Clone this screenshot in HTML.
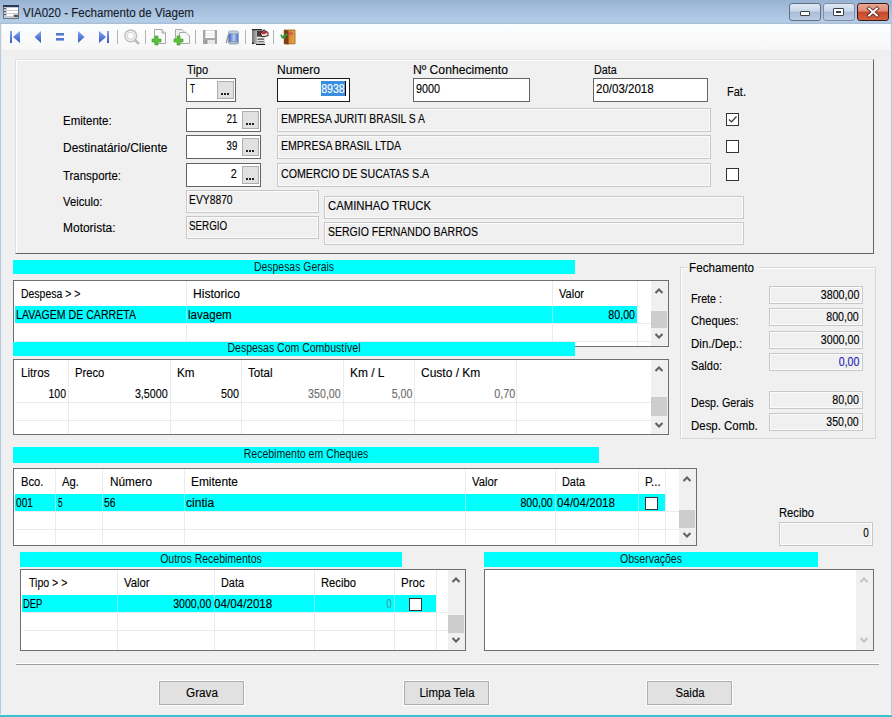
<!DOCTYPE html>
<html><head><meta charset="utf-8"><title>VIA020 - Fechamento de Viagem</title><style>
*{margin:0;padding:0;box-sizing:border-box}
html,body{width:892px;height:717px;overflow:hidden;background:#f0f0f0;font-family:"Liberation Sans",sans-serif;font-size:12px;color:#000}
.a{position:absolute}
.t{position:absolute;white-space:nowrap;line-height:14px;height:14px;-webkit-text-stroke-width:0.12px}
.ed{background:#fff;border:1px solid #646464}
.ro{background:#f0f0f0;border:1px solid #c8c8c8;box-shadow:inset 0 0 0 1px #fbfbfb}
.btn3{background:#e1e1e1;border:1px solid #adadad}
.cy{background:#00ffff}
.grid{background:#fff;border:1px solid #6e6e6e}
.vl{background:#ebebeb}
.hl{background:#ebebeb}
.sb{background:#f0f0f0}
.th{background:#cdcdcd}
.cb{background:#fff;border:1px solid #333}
.g{color:#6d6d6d}
</style></head><body>
<div class="a " style="left:0px;top:0px;width:892px;height:24px;background:linear-gradient(#98b2d3,#a9c2df 50%,#b4cde8 90%,#a8bcd0)"></div>
<svg class="a" style="left:3px;top:5px" width="16" height="14" viewBox="0 0 16 14"><rect x="0.5" y="0.5" width="15" height="13" fill="#c8ccd0" stroke="#6a7480"/><rect x="0" y="0" width="16" height="2" fill="#2a3a5a"/><rect x="4" y="3" width="11" height="2" fill="#fff"/><rect x="4" y="6" width="11" height="2" fill="#fff"/><rect x="4" y="9" width="6" height="2" fill="#fff"/><rect x="11" y="10" width="4" height="2" fill="#555"/><rect x="1" y="3" width="2" height="1" fill="#556"/><rect x="1" y="6" width="2" height="1" fill="#556"/><rect x="1" y="9" width="2" height="1" fill="#556"/></svg>
<div class="t " style="left:23px;top:6px;transform:scaleX(0.965);transform-origin:left top;color:#141c2c">VIA020 - Fechamento de Viagem</div>
<div class="a " style="left:789px;top:3px;width:32px;height:18px;border:1px solid #5d6f86;border-radius:3px;background:linear-gradient(#dfe8f3 0%,#c9d7e8 45%,#a9bdd6 50%,#bccde2 100%)"></div>
<div class="a " style="left:800px;top:11px;width:10px;height:5px;background:#fff;border:1px solid #3a4048;border-radius:1px"></div>
<div class="a " style="left:823px;top:3px;width:32px;height:18px;border:1px solid #7d8ea5;border-radius:3px;background:linear-gradient(#dfe8f3 0%,#c9d7e8 45%,#a9bdd6 50%,#bccde2 100%)"></div>
<div class="a " style="left:833px;top:8px;width:11px;height:8px;background:#fff;border:1px solid #3a4048;border-radius:1px"></div>
<div class="a " style="left:836px;top:11px;width:5px;height:2px;background:#3a4048"></div>
<div class="a " style="left:857px;top:3px;width:32px;height:18px;border:1px solid #3c1a14;border-radius:3px;background:linear-gradient(#eba695 0%,#de8a74 45%,#c6472a 50%,#d6623f 100%)"></div>
<svg class="a" style="left:866px;top:6px" width="14" height="12" viewBox="0 0 14 12"><path d="M3 2.5 L11 9.5 M11 2.5 L3 9.5" stroke="#4a1e12" stroke-width="3.6" stroke-linecap="square"/><path d="M3 2.5 L11 9.5 M11 2.5 L3 9.5" stroke="#fff" stroke-width="2" stroke-linecap="square"/></svg>
<div class="a " style="left:0px;top:24px;width:1px;height:693px;background:#bfc9d4"></div>
<div class="a " style="left:1px;top:24px;width:1px;height:691px;background:#e6eef8"></div>
<div class="a " style="left:2px;top:50px;width:2px;height:665px;background:linear-gradient(90deg,#eaf0f6,#eff1f3)"></div>
<div class="a " style="left:890px;top:24px;width:1px;height:693px;background:#e6eef8"></div>
<div class="a " style="left:891px;top:24px;width:1px;height:693px;background:#bfc9d4"></div>
<div class="a " style="left:0px;top:715px;width:892px;height:2px;background:#3ec0cc"></div>
<div class="a " style="left:0px;top:714px;width:892px;height:1px;background:#e6f2f8"></div>
<div class="a " style="left:2px;top:24px;width:888px;height:26px;background:linear-gradient(#fcfdfe,#f7f7f7)"></div>
<div class="a " style="left:2px;top:50px;width:888px;height:7px;background:#efefef"></div>
<svg class="a" style="left:0;top:24px" width="320" height="26" viewBox="0 24 320 26">
<defs>
<linearGradient id="bl" x1="0" y1="0" x2="0" y2="1"><stop offset="0" stop-color="#86a4ee"/><stop offset=".5" stop-color="#5a7edc"/><stop offset="1" stop-color="#3a58b8"/></linearGradient>
<linearGradient id="blr" x1="0" y1="0" x2="0" y2="1"><stop offset="0" stop-color="#86a4ee"/><stop offset=".5" stop-color="#5a7edc"/><stop offset="1" stop-color="#3a58b8"/></linearGradient>
<linearGradient id="cyl" x1="0" y1="0" x2="1" y2="0"><stop offset="0" stop-color="#3e5cb8"/><stop offset=".55" stop-color="#b4cbf4"/><stop offset="1" stop-color="#4464c0"/></linearGradient>
<linearGradient id="door" x1="0" y1="0" x2="1" y2="0"><stop offset="0" stop-color="#c07020"/><stop offset="1" stop-color="#eca848"/></linearGradient><linearGradient id="cab" x1="0" y1="0" x2="1" y2="0"><stop offset="0" stop-color="#707070"/><stop offset=".4" stop-color="#b8b8b8"/><stop offset="1" stop-color="#9a9a9a"/></linearGradient>
</defs>
<rect x="10" y="31" width="2" height="12" fill="url(#bl)"/>
<path d="M20 31 L13 37 L20 43 Z" fill="url(#blr)"/>
<path d="M41 31 L34.5 37 L41 43 Z" fill="url(#blr)"/>
<rect x="56" y="33" width="8" height="2.6" fill="#5577d4"/>
<rect x="56" y="38" width="8" height="2.6" fill="#5577d4"/>
<path d="M78 31 L84.5 37 L78 43 Z" fill="url(#bl)"/>
<path d="M99 31 L106 37 L99 43 Z" fill="url(#bl)"/>
<rect x="107" y="31" width="2" height="12" fill="url(#bl)"/>
<rect x="117" y="30" width="1" height="14" fill="#b4b4b4"/>
<circle cx="130.7" cy="35.8" r="5.9" fill="#f6f6f6" stroke="#c0c0c0" stroke-width="1.5"/>
<circle cx="130.7" cy="35.8" r="3.6" fill="#fafafa" stroke="#d0d0d0" stroke-width="1"/>
<path d="M135.5 40.5 L138.3 43.2" stroke="#bababa" stroke-width="2.6" stroke-linecap="round"/>
<rect x="145" y="30" width="1" height="14" fill="#b4b4b4"/>
<path d="M154.5 29.5 H162 L165.5 33 V43.5 H154.5 Z" fill="#fafafa" stroke="#a8a8a8"/>
<path d="M162 29.5 V33 H165.5" fill="#e0e0e0" stroke="#a8a8a8"/>
<path d="M155 36 h3 v3 h3 v3 h-3 v3 h-3 v-3 h-3 v-3 h3 z" fill="#58c23a" stroke="#3a9a22" stroke-width=".6"/>
<path d="M175.5 29.5 H182 L184 31.5 V41 H175.5 Z" fill="#f0f0f0" stroke="#aaa"/>
<path d="M179.5 32.5 H186 L189.5 36 V43.5 H179.5 Z" fill="#fafafa" stroke="#a8a8a8"/>
<path d="M177 36 h3 v3 h3 v3 h-3 v3 h-3 v-3 h-3 v-3 h3 z" fill="#58c23a" stroke="#3a9a22" stroke-width=".6"/>
<rect x="195" y="30" width="1" height="14" fill="#b4b4b4"/>
<rect x="205" y="30" width="10" height="8" fill="#fdfdfd"/>
<rect x="205" y="30" width="10" height="1" fill="#d8d8d8"/>
<rect x="206" y="33" width="8" height="1" fill="#ececec"/><rect x="206" y="35" width="8" height="1" fill="#ececec"/>
<rect x="203" y="30" width="2.3" height="14" fill="#a4a4a4"/>
<rect x="214.7" y="30" width="2.3" height="14" fill="#a4a4a4"/>
<rect x="203" y="38" width="14" height="2" fill="#a8a8a8"/>
<rect x="205" y="40" width="10" height="4" fill="#e6e6e6"/>
<rect x="205" y="40" width="2.4" height="4" fill="#9a9a9a"/>
<path d="M226.3 43 L228.3 35" stroke="#909090" stroke-width="1.2"/>
<rect x="228.5" y="32.5" width="10" height="10" fill="url(#cyl)"/>
<ellipse cx="233.5" cy="32.3" rx="5.3" ry="1.5" fill="#c6d2e0" stroke="#8a9cb4" stroke-width=".7"/>
<ellipse cx="233.5" cy="42.8" rx="5.3" ry="1.3" fill="#b4c0d0" stroke="#7a8aa4" stroke-width=".7"/>
<rect x="245" y="30" width="1" height="14" fill="#b4b4b4"/>
<rect x="252" y="29.5" width="12.5" height="14.5" fill="url(#cab)"/>
<rect x="252" y="29" width="10" height="1.3" fill="#2a2a2a"/>
<rect x="257" y="31" width="5" height="5.5" fill="#4a3a3a"/>
<rect x="257" y="37" width="7.5" height="6.5" fill="#e4e8e8"/>
<rect x="257.5" y="38.5" width="6.5" height="1.3" fill="#555"/>
<rect x="257.5" y="41.2" width="6.5" height="1.1" fill="#666"/>
<rect x="256" y="44" width="9" height="1" fill="#111"/>
<rect x="252" y="42.5" width="1.6" height="1.6" fill="#222"/>
<path d="M260.5 33.5 L264.2 30 L268 32.5 L268 35.8 L262 36.8 Z" fill="#f0e8e8" stroke="#2a0808" stroke-width=".9"/>
<path d="M261.2 33.4 L264.2 30.6 L267.6 32.8 L263.5 34.6 Z" fill="#c42a3a"/>
<rect x="273" y="30" width="1" height="14" fill="#b4b4b4"/>
<path d="M284.2 30 H295 V43.8 H284.2 Z" fill="url(#door)" stroke="#9a5a18" stroke-width=".8"/>
<path d="M284.2 29.8 L288.5 31 V44.5 L284.2 43.8 Z" fill="#7a3e10"/>
<path d="M289 32.2 L290.3 34.8 L291.6 32.2 L293 34.8" stroke="#e04858" stroke-width="1.1" fill="none"/>
<path d="M287.5 34.2 L282.6 37.2" stroke="#2e9a3a" stroke-width="2" fill="none"/>
<path d="M281 34.6 L282.4 37.6 L285.4 37.6" stroke="#2e9a3a" stroke-width="1.6" fill="none"/>
</svg>
<div class="a " style="left:15px;top:59px;width:859px;height:195px;border-top:1px solid #e0e0e0;border-left:1px solid #e0e0e0;border-right:1px solid #646464;border-bottom:1px solid #646464"></div>
<div class="a " style="left:16px;top:60px;width:857px;height:193px;border-top:1px solid #fff;border-left:1px solid #fff"></div>
<div class="t " style="left:187px;top:63px;transform:scaleX(0.917);transform-origin:left top;">Tipo</div>
<div class="t " style="left:277px;top:63px;transform:scaleX(1.008);transform-origin:left top;">Numero</div>
<div class="t " style="left:413px;top:63px;transform:scaleX(1.013);transform-origin:left top;">Nº Conhecimento</div>
<div class="t " style="left:594px;top:63px;transform:scaleX(0.892);transform-origin:left top;">Data</div>
<div class="t " style="left:727px;top:85px;transform:scaleX(0.919);transform-origin:left top;">Fat.</div>
<div class="a ed" style="left:186px;top:78px;width:50px;height:24px;"></div>
<div class="t " style="left:190px;top:82px;transform:scaleX(0.682);transform-origin:left top;">T</div>
<div class="a btn3" style="left:217px;top:81px;width:17px;height:18px;"></div>
<div class="a " style="left:221px;top:93px;width:2px;height:2px;background:#222"></div>
<div class="a " style="left:224px;top:93px;width:2px;height:2px;background:#222"></div>
<div class="a " style="left:227px;top:93px;width:2px;height:2px;background:#222"></div>
<div class="a " style="left:277px;top:78px;width:73px;height:24px;border:1px solid #1a1a1a;background:#fff"></div>
<div class="a " style="left:321px;top:81px;width:24px;height:15px;background:#3a8ee2"></div>
<div class="t " style="right:547px;top:82px;transform:scaleX(0.88);transform-origin:right top;color:#fff">8938</div>
<div class="a " style="left:345px;top:81px;width:1px;height:15px;background:#000"></div>
<div class="a ed" style="left:413px;top:78px;width:117px;height:24px;"></div>
<div class="t " style="left:416px;top:82px;transform:scaleX(0.899);transform-origin:left top;">9000</div>
<div class="a ed" style="left:593px;top:78px;width:115px;height:24px;"></div>
<div class="t " style="left:596px;top:82px;transform:scaleX(0.959);transform-origin:left top;">20/03/2018</div>
<div class="t " style="left:63px;top:114px;transform:scaleX(0.959);transform-origin:left top;">Emitente:</div>
<div class="a ed" style="left:186px;top:108px;width:75px;height:24px;"></div>
<div class="t " style="right:655px;top:112px;transform:scaleX(0.787);transform-origin:right top;">21</div>
<div class="a btn3" style="left:242px;top:111px;width:17px;height:18px;"></div>
<div class="a " style="left:246px;top:123px;width:2px;height:2px;background:#222"></div>
<div class="a " style="left:249px;top:123px;width:2px;height:2px;background:#222"></div>
<div class="a " style="left:252px;top:123px;width:2px;height:2px;background:#222"></div>
<div class="a ro" style="left:277px;top:108px;width:434px;height:24px;"></div>
<div class="t " style="left:281px;top:112px;transform:scaleX(0.866);transform-origin:left top;">EMPRESA JURITI BRASIL S A</div>
<div class="a cb" style="left:726px;top:113px;width:13px;height:13px;"></div>
<svg class="a" style="left:727px;top:114px" width="11" height="11" viewBox="0 0 11 11"><path d="M2 5.5 L4.5 8 L9.5 2.5" stroke="#333" stroke-width="1.2" fill="none"/></svg>
<div class="t " style="left:63px;top:141px;transform:scaleX(0.997);transform-origin:left top;">Destinatário/Cliente</div>
<div class="a ed" style="left:186px;top:135px;width:75px;height:24px;"></div>
<div class="t " style="right:655px;top:139px;transform:scaleX(0.809);transform-origin:right top;">39</div>
<div class="a btn3" style="left:242px;top:138px;width:17px;height:18px;"></div>
<div class="a " style="left:246px;top:150px;width:2px;height:2px;background:#222"></div>
<div class="a " style="left:249px;top:150px;width:2px;height:2px;background:#222"></div>
<div class="a " style="left:252px;top:150px;width:2px;height:2px;background:#222"></div>
<div class="a ro" style="left:277px;top:135px;width:434px;height:24px;"></div>
<div class="t " style="left:281px;top:139px;transform:scaleX(0.878);transform-origin:left top;">EMPRESA BRASIL LTDA</div>
<div class="a cb" style="left:726px;top:140px;width:13px;height:13px;"></div>
<div class="t " style="left:63px;top:169px;transform:scaleX(0.952);transform-origin:left top;">Transporte:</div>
<div class="a ed" style="left:186px;top:163px;width:75px;height:24px;"></div>
<div class="t " style="right:655px;top:167px;transform:scaleX(0.899);transform-origin:right top;">2</div>
<div class="a btn3" style="left:242px;top:166px;width:17px;height:18px;"></div>
<div class="a " style="left:246px;top:178px;width:2px;height:2px;background:#222"></div>
<div class="a " style="left:249px;top:178px;width:2px;height:2px;background:#222"></div>
<div class="a " style="left:252px;top:178px;width:2px;height:2px;background:#222"></div>
<div class="a ro" style="left:277px;top:163px;width:434px;height:24px;"></div>
<div class="t " style="left:281px;top:167px;transform:scaleX(0.888);transform-origin:left top;">COMERCIO DE SUCATAS S.A</div>
<div class="a cb" style="left:726px;top:168px;width:13px;height:13px;"></div>
<div class="t " style="left:63px;top:195px;transform:scaleX(0.94);transform-origin:left top;">Veiculo:</div>
<div class="t " style="left:63px;top:221px;transform:scaleX(0.998);transform-origin:left top;">Motorista:</div>
<div class="a ro" style="left:186px;top:190px;width:133px;height:23px;"></div>
<div class="t " style="left:189px;top:193px;transform:scaleX(0.86);transform-origin:left top;">EVY8870</div>
<div class="a ro" style="left:186px;top:216px;width:133px;height:23px;"></div>
<div class="t " style="left:189px;top:219px;transform:scaleX(0.818);transform-origin:left top;">SERGIO</div>
<div class="a ro" style="left:324px;top:196px;width:420px;height:23px;"></div>
<div class="t " style="left:328px;top:199px;transform:scaleX(0.944);transform-origin:left top;">CAMINHAO TRUCK</div>
<div class="a ro" style="left:324px;top:222px;width:420px;height:23px;"></div>
<div class="t " style="left:328px;top:225px;transform:scaleX(0.875);transform-origin:left top;">SERGIO FERNANDO BARROS</div>
<div class="a cy" style="left:13px;top:260px;width:562px;height:14px;"></div>
<div class="t " style="left:94.0px;width:400px;text-align:center;top:260px;transform:scaleX(0.869);transform-origin:center top;color:#0a1a1a;-webkit-text-stroke-width:0">Despesas Gerais</div>
<div class="a grid" style="left:13px;top:280px;width:656px;height:67px;"></div>
<div class="a hl" style="left:16px;top:323px;width:635px;height:1px;"></div>
<div class="a hl" style="left:16px;top:341px;width:635px;height:1px;"></div>
<div class="a cy" style="left:15px;top:306px;width:622px;height:17px;"></div>
<div class="a vl" style="left:186px;top:281px;width:1px;height:65px;"></div>
<div class="a vl" style="left:552px;top:281px;width:1px;height:65px;"></div>
<div class="a vl" style="left:637px;top:281px;width:1px;height:65px;"></div>
<div class="a " style="left:186px;top:306px;width:1px;height:17px;background:#7ff"></div>
<div class="a " style="left:552px;top:306px;width:1px;height:17px;background:#7ff"></div>
<div class="t " style="left:21px;top:287px;transform:scaleX(0.871);transform-origin:left top;">Despesa &gt; &gt;</div>
<div class="t " style="left:193px;top:287px;transform:scaleX(1.007);transform-origin:left top;">Historico</div>
<div class="t " style="left:559px;top:287px;transform:scaleX(0.922);transform-origin:left top;">Valor</div>
<div class="t " style="left:16px;top:308px;transform:scaleX(0.882);transform-origin:left top;">LAVAGEM DE CARRETA</div>
<div class="t " style="left:188px;top:308px;transform:scaleX(0.963);transform-origin:left top;">lavagem</div>
<div class="t " style="right:257px;top:308px;transform:scaleX(0.889);transform-origin:right top;">80,00</div>
<div class="a sb" style="left:651px;top:281px;width:17px;height:65px;"></div>
<svg class="a" style="left:654px;top:287px" width="10" height="8" viewBox="0 0 10 8"><path d="M1.5 6 L5 2.5 L8.5 6" stroke="#606060" stroke-width="2" fill="none"/></svg>
<div class="a th" style="left:651px;top:311px;width:16px;height:17px;"></div>
<svg class="a" style="left:654px;top:332px" width="10" height="8" viewBox="0 0 10 8"><path d="M1.5 2 L5 5.5 L8.5 2" stroke="#606060" stroke-width="2" fill="none"/></svg>
<div class="a cy" style="left:13px;top:342px;width:562px;height:14px;"></div>
<div class="t " style="left:94.0px;width:400px;text-align:center;top:341px;transform:scaleX(0.875);transform-origin:center top;color:#0a1a1a;-webkit-text-stroke-width:0">Despesas Com Combustível</div>
<div class="a grid" style="left:13px;top:359px;width:656px;height:76px;"></div>
<div class="a hl" style="left:16px;top:402px;width:635px;height:1px;"></div>
<div class="a hl" style="left:16px;top:420px;width:635px;height:1px;"></div>
<div class="a vl" style="left:68px;top:360px;width:1px;height:74px;"></div>
<div class="a vl" style="left:170px;top:360px;width:1px;height:74px;"></div>
<div class="a vl" style="left:241px;top:360px;width:1px;height:74px;"></div>
<div class="a vl" style="left:343px;top:360px;width:1px;height:74px;"></div>
<div class="a vl" style="left:414px;top:360px;width:1px;height:74px;"></div>
<div class="a vl" style="left:516px;top:360px;width:1px;height:74px;"></div>
<div class="t " style="left:21px;top:366px;transform:scaleX(0.971);transform-origin:left top;">Litros</div>
<div class="t " style="left:75px;top:366px;transform:scaleX(0.935);transform-origin:left top;">Preco</div>
<div class="t " style="left:177px;top:366px;transform:scaleX(0.972);transform-origin:left top;">Km</div>
<div class="t " style="left:248px;top:366px;transform:scaleX(0.967);transform-origin:left top;">Total</div>
<div class="t " style="left:350px;top:366px;transform:scaleX(0.995);transform-origin:left top;">Km / L</div>
<div class="t " style="left:421px;top:366px;transform:scaleX(0.999);transform-origin:left top;">Custo / Km</div>
<div class="t " style="right:826px;top:387px;transform:scaleX(0.874);transform-origin:right top;">100</div>
<div class="t " style="right:724px;top:387px;transform:scaleX(0.894);transform-origin:right top;">3,5000</div>
<div class="t " style="right:653px;top:387px;transform:scaleX(0.899);transform-origin:right top;">500</div>
<div class="t " style="right:551px;top:387px;transform:scaleX(0.888);transform-origin:right top;color:#6d6d6d">350,00</div>
<div class="t " style="right:480px;top:387px;transform:scaleX(0.886);transform-origin:right top;color:#6d6d6d">5,00</div>
<div class="t " style="right:377px;top:387px;transform:scaleX(0.899);transform-origin:right top;color:#6d6d6d">0,70</div>
<div class="a sb" style="left:651px;top:360px;width:17px;height:74px;"></div>
<svg class="a" style="left:654px;top:365px" width="10" height="8" viewBox="0 0 10 8"><path d="M1.5 6 L5 2.5 L8.5 6" stroke="#606060" stroke-width="2" fill="none"/></svg>
<div class="a th" style="left:651px;top:397px;width:16px;height:19px;"></div>
<svg class="a" style="left:654px;top:421px" width="10" height="8" viewBox="0 0 10 8"><path d="M1.5 2 L5 5.5 L8.5 2" stroke="#606060" stroke-width="2" fill="none"/></svg>
<div class="a cy" style="left:13px;top:447px;width:586px;height:16px;"></div>
<div class="t " style="left:106.0px;width:400px;text-align:center;top:447px;transform:scaleX(0.877);transform-origin:center top;color:#0a1a1a;-webkit-text-stroke-width:0">Recebimento em Cheques</div>
<div class="a grid" style="left:13px;top:468px;width:684px;height:78px;"></div>
<div class="a hl" style="left:16px;top:511px;width:663px;height:1px;"></div>
<div class="a hl" style="left:16px;top:529px;width:663px;height:1px;"></div>
<div class="a cy" style="left:15px;top:494px;width:650px;height:17px;"></div>
<div class="a vl" style="left:55px;top:469px;width:1px;height:76px;"></div>
<div class="a vl" style="left:102px;top:469px;width:1px;height:76px;"></div>
<div class="a vl" style="left:184px;top:469px;width:1px;height:76px;"></div>
<div class="a vl" style="left:465px;top:469px;width:1px;height:76px;"></div>
<div class="a vl" style="left:555px;top:469px;width:1px;height:76px;"></div>
<div class="a vl" style="left:638px;top:469px;width:1px;height:76px;"></div>
<div class="a vl" style="left:665px;top:469px;width:1px;height:76px;"></div>
<div class="a " style="left:55px;top:494px;width:1px;height:17px;background:#7ff"></div>
<div class="a " style="left:102px;top:494px;width:1px;height:17px;background:#7ff"></div>
<div class="a " style="left:184px;top:494px;width:1px;height:17px;background:#7ff"></div>
<div class="a " style="left:465px;top:494px;width:1px;height:17px;background:#7ff"></div>
<div class="a " style="left:555px;top:494px;width:1px;height:17px;background:#7ff"></div>
<div class="a " style="left:638px;top:494px;width:1px;height:17px;background:#7ff"></div>
<div class="t " style="left:21px;top:475px;transform:scaleX(0.929);transform-origin:left top;">Bco.</div>
<div class="t " style="left:62px;top:475px;transform:scaleX(0.944);transform-origin:left top;">Ag.</div>
<div class="t " style="left:110px;top:475px;transform:scaleX(0.984);transform-origin:left top;">Número</div>
<div class="t " style="left:191px;top:475px;transform:scaleX(0.992);transform-origin:left top;">Emitente</div>
<div class="t " style="left:472px;top:475px;transform:scaleX(0.94);transform-origin:left top;">Valor</div>
<div class="t " style="left:562px;top:475px;transform:scaleX(0.907);transform-origin:left top;">Data</div>
<div class="t " style="left:645px;top:475px;transform:scaleX(0.948);transform-origin:left top;">P...</div>
<div class="t " style="left:16px;top:496px;transform:scaleX(0.849);transform-origin:left top;">001</div>
<div class="t " style="left:58px;top:496px;transform:scaleX(0.689);transform-origin:left top;">5</div>
<div class="t " style="left:104px;top:496px;transform:scaleX(0.862);transform-origin:left top;">56</div>
<div class="t " style="left:186px;top:496px;transform:scaleX(1.01);transform-origin:left top;">cintia</div>
<div class="t " style="right:339px;top:496px;transform:scaleX(0.88);transform-origin:right top;">800,00</div>
<div class="t " style="left:557px;top:496px;transform:scaleX(0.966);transform-origin:left top;">04/04/2018</div>
<div class="a sb" style="left:679px;top:469px;width:17px;height:76px;"></div>
<svg class="a" style="left:682px;top:475px" width="10" height="8" viewBox="0 0 10 8"><path d="M1.5 6 L5 2.5 L8.5 6" stroke="#606060" stroke-width="2" fill="none"/></svg>
<div class="a th" style="left:679px;top:510px;width:16px;height:18px;"></div>
<svg class="a" style="left:682px;top:531px" width="10" height="8" viewBox="0 0 10 8"><path d="M1.5 2 L5 5.5 L8.5 2" stroke="#606060" stroke-width="2" fill="none"/></svg>
<div class="a cb" style="left:645px;top:497px;width:13px;height:13px;"></div>
<div class="a cy" style="left:20px;top:552px;width:382px;height:15px;"></div>
<div class="t " style="left:11.0px;width:400px;text-align:center;top:552px;transform:scaleX(0.876);transform-origin:center top;color:#0a1a1a;-webkit-text-stroke-width:0">Outros Recebimentos</div>
<div class="a grid" style="left:20px;top:569px;width:446px;height:82px;"></div>
<div class="a hl" style="left:23px;top:612px;width:425px;height:1px;"></div>
<div class="a hl" style="left:23px;top:630px;width:425px;height:1px;"></div>
<div class="a cy" style="left:22px;top:595px;width:414px;height:17px;"></div>
<div class="a vl" style="left:117px;top:570px;width:1px;height:80px;"></div>
<div class="a vl" style="left:214px;top:570px;width:1px;height:80px;"></div>
<div class="a vl" style="left:314px;top:570px;width:1px;height:80px;"></div>
<div class="a vl" style="left:394px;top:570px;width:1px;height:80px;"></div>
<div class="a vl" style="left:436px;top:570px;width:1px;height:80px;"></div>
<div class="a " style="left:117px;top:595px;width:1px;height:17px;background:#7ff"></div>
<div class="a " style="left:214px;top:595px;width:1px;height:17px;background:#7ff"></div>
<div class="a " style="left:314px;top:595px;width:1px;height:17px;background:#7ff"></div>
<div class="a " style="left:394px;top:595px;width:1px;height:17px;background:#7ff"></div>
<div class="t " style="left:29px;top:576px;transform:scaleX(0.881);transform-origin:left top;">Tipo &gt; &gt;</div>
<div class="t " style="left:124px;top:576px;transform:scaleX(0.944);transform-origin:left top;">Valor</div>
<div class="t " style="left:221px;top:576px;transform:scaleX(0.907);transform-origin:left top;">Data</div>
<div class="t " style="left:321px;top:576px;transform:scaleX(0.937);transform-origin:left top;">Recibo</div>
<div class="t " style="left:401px;top:576px;transform:scaleX(0.96);transform-origin:left top;">Proc</div>
<div class="t " style="left:23px;top:597px;transform:scaleX(0.782);transform-origin:left top;">DEP</div>
<div class="t " style="right:681px;top:597px;transform:scaleX(0.881);transform-origin:right top;">3000,00</div>
<div class="t " style="left:214px;top:597px;transform:scaleX(0.971);transform-origin:left top;">04/04/2018</div>
<div class="t " style="right:500px;top:597px;transform:scaleX(0.824);transform-origin:right top;color:#4a9a9a">0</div>
<div class="a sb" style="left:448px;top:570px;width:17px;height:80px;"></div>
<svg class="a" style="left:451px;top:576px" width="10" height="8" viewBox="0 0 10 8"><path d="M1.5 6 L5 2.5 L8.5 6" stroke="#606060" stroke-width="2" fill="none"/></svg>
<div class="a th" style="left:448px;top:615px;width:16px;height:18px;"></div>
<svg class="a" style="left:451px;top:636px" width="10" height="8" viewBox="0 0 10 8"><path d="M1.5 2 L5 5.5 L8.5 2" stroke="#606060" stroke-width="2" fill="none"/></svg>
<div class="a cb" style="left:409px;top:598px;width:13px;height:13px;"></div>
<div class="a cy" style="left:484px;top:552px;width:334px;height:15px;"></div>
<div class="t " style="left:451.0px;width:400px;text-align:center;top:552px;transform:scaleX(0.874);transform-origin:center top;color:#0a1a1a;-webkit-text-stroke-width:0">Observações</div>
<div class="a grid" style="left:484px;top:569px;width:390px;height:82px;"></div>
<div class="a sb" style="left:856px;top:570px;width:17px;height:80px;"></div>
<svg class="a" style="left:859px;top:576px" width="10" height="8" viewBox="0 0 10 8"><path d="M1.5 6 L5 2.5 L8.5 6" stroke="#c2c2c2" stroke-width="2" fill="none"/></svg>
<svg class="a" style="left:859px;top:636px" width="10" height="8" viewBox="0 0 10 8"><path d="M1.5 2 L5 5.5 L8.5 2" stroke="#c2c2c2" stroke-width="2" fill="none"/></svg>
<div class="a " style="left:680px;top:267px;width:196px;height:172px;border:1px solid #d8d8d8;box-shadow:inset 1px 1px 0 #fff"></div>
<div class="a " style="left:688px;top:261px;width:70px;height:14px;background:#f0f0f0"></div>
<div class="t " style="left:689px;top:261px;transform:scaleX(0.974);transform-origin:left top;">Fechamento</div>
<div class="t " style="left:691px;top:292px;transform:scaleX(0.894);transform-origin:left top;">Frete :</div>
<div class="a ro" style="left:769px;top:286px;width:94px;height:18px;"></div>
<div class="t " style="right:33px;top:288px;transform:scaleX(0.89);transform-origin:right top;">3800,00</div>
<div class="t " style="left:691px;top:314px;transform:scaleX(0.929);transform-origin:left top;">Cheques:</div>
<div class="a ro" style="left:769px;top:308px;width:94px;height:18px;"></div>
<div class="t " style="right:33px;top:310px;transform:scaleX(0.883);transform-origin:right top;">800,00</div>
<div class="t " style="left:691px;top:337px;transform:scaleX(0.96);transform-origin:left top;">Din./Dep.:</div>
<div class="a ro" style="left:769px;top:331px;width:94px;height:18px;"></div>
<div class="t " style="right:33px;top:333px;transform:scaleX(0.89);transform-origin:right top;">3000,00</div>
<div class="t " style="left:691px;top:359px;transform:scaleX(0.911);transform-origin:left top;">Saldo:</div>
<div class="a ro" style="left:769px;top:353px;width:94px;height:18px;"></div>
<div class="t " style="right:33px;top:355px;transform:scaleX(0.882);transform-origin:right top;color:#1c1cb4">0,00</div>
<div class="t " style="left:691px;top:396px;transform:scaleX(0.894);transform-origin:left top;">Desp. Gerais</div>
<div class="a ro" style="left:769px;top:391px;width:94px;height:18px;"></div>
<div class="t " style="right:33px;top:393px;transform:scaleX(0.892);transform-origin:right top;">80,00</div>
<div class="t " style="left:691px;top:419px;transform:scaleX(0.954);transform-origin:left top;">Desp. Comb.</div>
<div class="a ro" style="left:769px;top:413px;width:94px;height:18px;"></div>
<div class="t " style="right:33px;top:415px;transform:scaleX(0.883);transform-origin:right top;">350,00</div>
<div class="t " style="left:779px;top:506px;transform:scaleX(0.937);transform-origin:left top;">Recibo</div>
<div class="a ro" style="left:779px;top:522px;width:94px;height:24px;"></div>
<div class="t " style="right:23px;top:526px;transform:scaleX(0.824);transform-origin:right top;">0</div>
<div class="a " style="left:16px;top:663px;width:863px;height:1px;background:#fff"></div>
<div class="a " style="left:16px;top:664px;width:863px;height:1px;background:#a0a0a0"></div>
<div class="a btn3" style="left:159px;top:681px;width:85px;height:24px;box-shadow:0 0 0 1px #fdfdfd"></div>
<div class="t " style="left:1.5px;width:400px;text-align:center;top:686px;transform:scaleX(0.979);transform-origin:center top;">Grava</div>
<div class="a btn3" style="left:404px;top:681px;width:85px;height:24px;box-shadow:0 0 0 1px #fdfdfd"></div>
<div class="t " style="left:246.5px;width:400px;text-align:center;top:686px;transform:scaleX(0.951);transform-origin:center top;">Limpa Tela</div>
<div class="a btn3" style="left:647px;top:681px;width:85px;height:24px;box-shadow:0 0 0 1px #fdfdfd"></div>
<div class="t " style="left:489.5px;width:400px;text-align:center;top:686px;transform:scaleX(0.945);transform-origin:center top;">Saida</div>
</body></html>
